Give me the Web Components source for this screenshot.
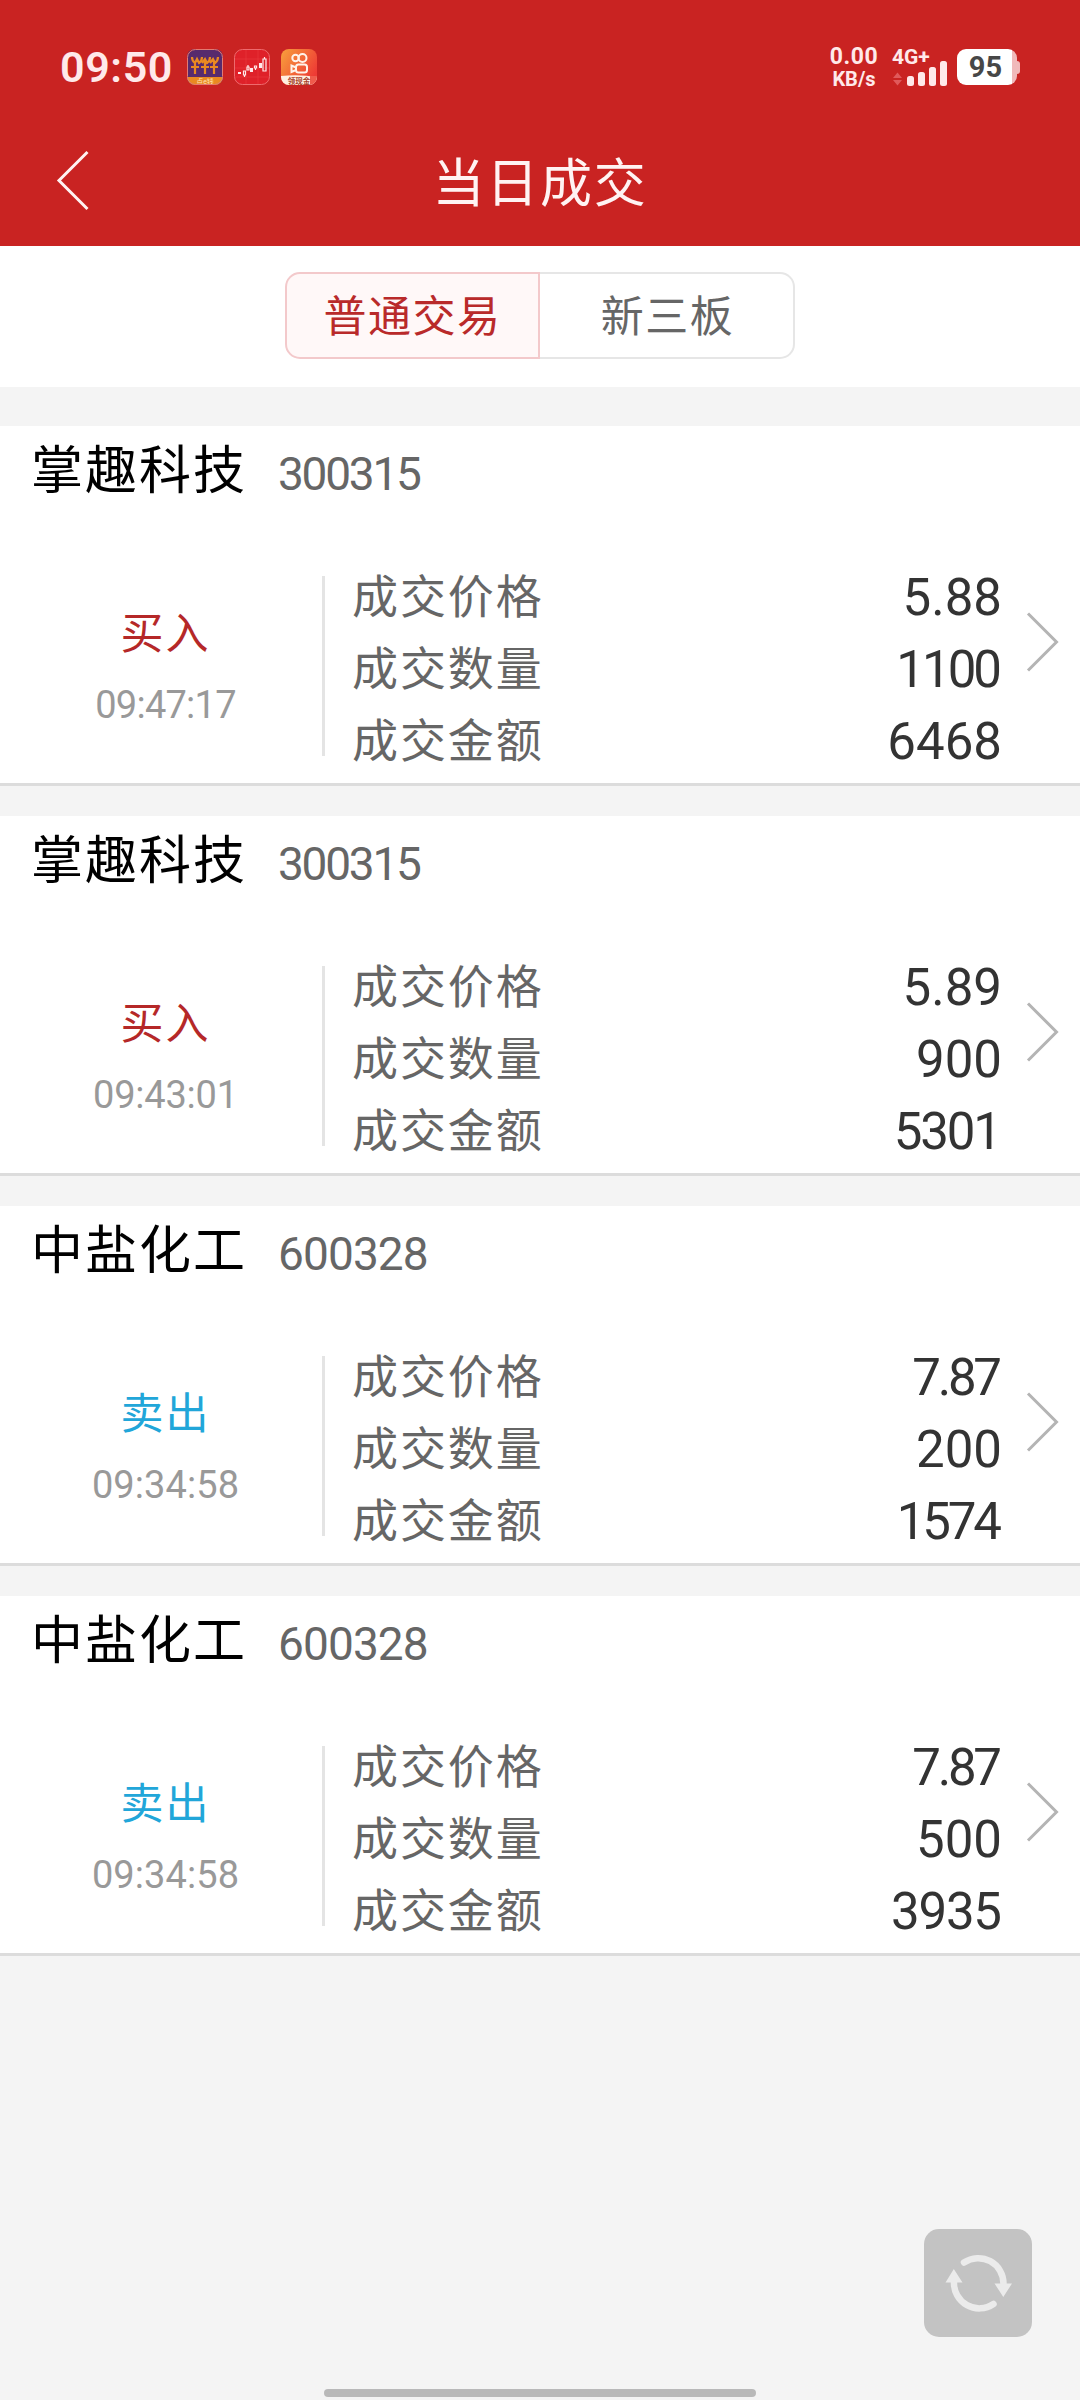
<!DOCTYPE html>
<html lang="zh-CN">
<head>
<meta charset="utf-8">
<title>当日成交</title>
<style>
  html, body {
    margin: 0;
    background: #f4f4f4;
  }
  body {
    width: 1080px;
    height: 2400px;
    overflow: hidden;
    font-family: Roboto, "Noto Sans CJK SC", sans-serif;
  }
</style>
</head>
<body>
<trade-page></trade-page>

<script>
class StatusBar extends HTMLElement {
  constructor() {
    super();
    this.attachShadow({ mode: 'open' });
  }

  connectedCallback() {
    this.shadowRoot.innerHTML = `
      <style>
        :host {
          display: flex;
          align-items: center;
          height: 134px;
          padding: 0 60px 0 60px;
          box-sizing: border-box;
          color: #ffe9ea;
        }
        .clock {
          width: 127px;
          font-size: 43px;
          font-weight: 600;
          line-height: 50px;
          letter-spacing: 0.6px;
        }
        .apps { display: flex; gap: 11px; }
        svg { display: block; }
        .net {
          margin-left: auto;
          width: 54px;
          text-align: center;
          font-weight: 700;
          font-size: 23px;
          line-height: 22px;
        }
        .net div:first-child { padding-top: 1px; letter-spacing: 0.5px; }
        .unit { font-size: 20px; }
        .signal { margin-left: 12px; width: 56px; }
        .gen {
          font-size: 21px;
          font-weight: 700;
          line-height: 18px;
          margin-left: -1px;
        }
        .battery {
          display: flex;
          align-items: center;
          margin-left: 8px;
        }
        .cell {
          width: 60px;
          height: 36px;
          border-radius: 9px;
          box-sizing: border-box;
          padding-right: 3px;
          background: linear-gradient(to right, #fff 55px, #f0b9ba 55px);
          color: #474747;
          font-size: 29px;
          font-weight: 700;
          line-height: 36px;
          text-align: center;
        }
        .cap {
          width: 3px;
          height: 13px;
          border-radius: 0 3px 3px 0;
          background: #f0b9ba;
        }
      </style>
      <div class="clock">09:50</div>
      <div class="apps">
        <svg width="36" height="36" viewBox="0 0 36 36">
          <defs><clipPath id="a"><rect width="36" height="36" rx="8"/></clipPath></defs>
          <g clip-path="url(#a)">
            <rect width="36" height="36" fill="#572a6d"/>
            <rect y="28" width="36" height="8" fill="#e98921"/>
            <path d="M5 8q0 4 3 6l2-4 2 4q3-2 3-6M15 14l3-4 2 4q3-2 3-6M23 14l3-4 2 4q3-2 3-6M8 14v11M18 13v12M27 13v12M4 18h8M14 18h8M23 18h8" fill="none" stroke="#e98921" stroke-width="2.200"/>
            <text x="18" y="35" font-size="7" text-anchor="middle" fill="#ffe1b5">点e钱</text>
          </g>
          <rect x=".5" y=".5" width="35" height="35" rx="8" fill="none" stroke="#e27a72"/>
        </svg>
        <svg width="36" height="36" viewBox="0 0 36 36">
          <rect x=".5" y=".5" width="35" height="35" rx="8" fill="#df2129" stroke="#ee6a6d"/>
          <path d="M1 10h34M1 19h34M1 28h34M12 1v34M24 1v34" stroke="#e8373e" stroke-width=".7"/>
          <path d="M4 23h3v2H4zM16 19h3v4h-3zM25 14h3v5h-3z" fill="#ffe9ea"/>
          <path d="M9.500 22h2v4h-2zM13 18h2v3h-2zM20.500 17h2v2h-2zM29 10h3v12h-3zM10.500 26v2M14 16v2M21.500 19v2M30.500 8v2" fill="none" stroke="#ffe9ea" stroke-width="1.200"/>
        </svg>
        <svg width="36" height="36" viewBox="0 0 36 36">
          <defs>
            <linearGradient id="g" x1="0" y1="0" x2="1" y2=".6"><stop stop-color="#f8a13c"/><stop offset="1" stop-color="#ee3b35"/></linearGradient>
            <clipPath id="b"><rect width="36" height="36" rx="8"/></clipPath>
          </defs>
          <g clip-path="url(#b)">
            <rect width="36" height="36" fill="url(#g)"/>
            <g fill="none" stroke="#fff3ea" stroke-width="2">
              <circle cx="14.500" cy="9" r="3.200"/><circle cx="21.500" cy="9" r="4"/>
              <rect x="15" y="15.500" width="11" height="8" rx="2.500"/>
              <path d="M15 18.500l-4.500-2v6.500l4.500-2z"/>
            </g>
            <path d="M0 27Q18 25 36 28V36H0z" fill="#fff0e2"/>
            <path d="M29 27h7v9h-7z" fill="#ef5b4c"/>
            <text x="18" y="34.500" font-size="7.500" font-weight="700" text-anchor="middle" fill="#a5402a">领现金</text>
          </g>
        </svg>
      </div>
      <div class="net"><div>0.00</div><div class="unit">KB/s</div></div>
      <div class="signal">
        <div class="gen">4G+</div>
        <svg width="56" height="20" viewBox="0 0 56 20" overflow="visible">
          <path d="M0 12l4.500-5.500 4.500 5.500zM0 14h9l-4.500 5.500z" fill="#e0595b"/>
          <g fill="#ffe9ea">
            <rect x="14" y="10" width="7" height="10" rx="2.500"/>
            <rect x="25" y="6" width="7" height="14" rx="2.500"/>
            <rect x="36" y="1" width="7" height="19" rx="2.500"/>
            <rect x="47" y="-5" width="7" height="25" rx="2.500"/>
          </g>
        </svg>
      </div>
      <div class="battery"><div class="cell">95</div><div class="cap"></div></div>
    `;
  }
}

class NavBar extends HTMLElement {
  constructor() {
    super();
    this.attachShadow({ mode: 'open' });
  }

  connectedCallback() {
    this.shadowRoot.innerHTML = `
      <style>
        :host {
          display: grid;
          grid-template-columns: 140px 1fr 140px;
          height: 112px;
          color: #fff3f3;
        }
        svg { display: block; margin: 16px 0 0 56px; }
        h1 {
          margin: 13px 0 0;
          font-size: 52px;
          font-weight: 400;
          line-height: 76px;
          letter-spacing: 1.8px;
          text-align: center;
        }
      </style>
      <svg width="34" height="61" viewBox="0 0 34 61">
        <path d="M31.500 2L3 30.500L31.500 59" fill="none" stroke="currentColor" stroke-width="3"/>
      </svg>
      <h1><slot></slot></h1>
    `;
  }
}

class SegmentTabs extends HTMLElement {
  constructor() {
    super();
    this.attachShadow({ mode: 'open' });
  }

  connectedCallback() {
    const labels = this.getAttribute('labels').split(',');
    this.shadowRoot.innerHTML = `
      <style>
        :host {
          display: flex;
          justify-content: center;
          height: 141px;
          padding-top: 26px;
          box-sizing: border-box;
          background: #fff;
        }
        .tab {
          width: 255px;
          height: 87px;
          box-sizing: border-box;
          border: 2px solid #e6e6e6;
          color: #666;
          font-size: 43px;
          line-height: 86px;
          letter-spacing: 1.5px;
          text-align: center;
        }
        .tab:last-child {
          border-left: 0;
          border-radius: 0 15px 15px 0;
          padding-left: 2px;
        }
        .tab.active {
          border-color: #f3c9cb;
          border-radius: 15px 0 0 15px;
          background: #fff8f8;
          color: #b92a2a;
        }
      </style>
      ${labels.map((t, i) => `<div class="tab ${i === 0 ? 'active' : ''}">${t}</div>`).join('')}
    `;
  }
}

// Extra tightening for the digits that should sit narrower than the rest
const NARROW = { 1: 1.5, 3: 0.6, 7: 1.6 };

function tracking(text, base, scale) {
  const sum = [...text].reduce((n, c) => n + (NARROW[c] || 0), 0);
  return (base - sum * scale).toFixed(2);
}

class TradeCard extends HTMLElement {
  constructor() {
    super();
    this.attachShadow({ mode: 'open' });
  }

  set trade(t) {
    const rows = [['成交价格', t.price], ['成交数量', t.count], ['成交金额', t.amount]];

    this.shadowRoot.innerHTML = `
      <style>
        :host {
          display: flex;
          flex-direction: column;
          height: 360px;
          box-sizing: border-box;
          border-bottom: 3px solid #dcdcdc;
          background: #fff;
        }
        .head {
          display: flex;
          height: 141px;
          padding-left: 31px;
          line-height: 91px;
        }
        .name {
          width: 247px;
          color: #000;
          font-size: 52px;
          letter-spacing: 2px;
        }
        .code { padding-top: 3px; color: #666; font-size: 46px; }
        .body { display: flex; }
        .side {
          width: 322px;
          padding: 27px 0 0 9px;
          box-sizing: border-box;
          text-align: center;
        }
        .kind {
          font-size: 43px;
          line-height: 80px;
          letter-spacing: 2px;
          color: ${t.side === '买入' ? '#b52828' : '#21a6d9'};
        }
        .time { color: #999; font-size: 38px; line-height: 63px; }
        .rows {
          flex: 1;
          height: 180px;
          margin-top: 9px;
          padding-left: 27px;
          border-left: 3px solid #e4e4e4;
        }
        .row {
          display: flex;
          justify-content: space-between;
          height: 72px;
          line-height: 72px;
        }
        .row:first-child { margin-top: -14px; }
        .label { margin-top: -1px; color: #666; font-size: 46px; letter-spacing: 1.9px; }
        .value { color: #333; font-size: 51px; }
        svg { display: block; width: 34px; margin: 44px 20px 0 24px; }
      </style>
      <div class="head">
        <div class="name">${t.name}</div>
        <div class="code" style="letter-spacing:${tracking(t.code, -0.5, 0.65)}px">${t.code}</div>
      </div>
      <div class="body">
        <div class="side">
          <div class="kind">${t.side}</div>
          <div class="time" style="letter-spacing:${tracking(t.time, 0.2, 0.2)}px">${t.time}</div>
        </div>
        <div class="rows">
          ${rows.map(([k, v]) => {
            const ls = tracking(v, 0, 1);
            return `
            <div class="row">
              <span class="label">${k}</span>
              <span class="value" style="letter-spacing:${ls}px;margin-right:${-ls}px">${v}</span>
            </div>`;
          }).join('')}
        </div>
        <svg width="34" height="61" viewBox="0 0 34 61">
          <path d="M2 2.500L30.500 31L2 59.500" fill="none" stroke="#b4b4b4" stroke-width="3"/>
        </svg>
      </div>
    `;
  }
}

class RefreshButton extends HTMLElement {
  constructor() {
    super();
    this.attachShadow({ mode: 'open' });
  }

  connectedCallback() {
    this.shadowRoot.innerHTML = `
      <style>
        :host {
          display: block;
          width: 108px;
          height: 108px;
          border-radius: 15px;
          background: #c3c3c3;
        }
        svg { display: block; }
      </style>
      <svg width="108" height="108" viewBox="0 0 108 108">
        <g fill="none" stroke="#ebebeb" stroke-width="6.500" stroke-linecap="round">
          <path d="M40 33.500A25.300 25.300 0 0 1 79.500 55"/>
          <path d="M69.500 75A25.300 25.300 0 0 1 30 53"/>
        </g>
        <path d="M70.500 54.500H88L79.300 68zM21.500 53.500H38.500L29.800 40z" fill="#ebebeb"/>
      </svg>
    `;
  }
}

class TradePage extends HTMLElement {
  constructor() {
    super();
    this.attachShadow({ mode: 'open' });
  }

  connectedCallback() {
    this.shadowRoot.innerHTML = `
      <style>
        :host {
          display: block;
          position: relative;
          height: 2400px;
        }
        header { height: 246px; background: #c92322; }
        .list {
          display: flex;
          flex-direction: column;
          gap: 30px;
          margin-top: 39px;
        }
        refresh-button {
          position: absolute;
          right: 48px;
          top: 2229px;
        }
        .home {
          position: absolute;
          left: 324px;
          bottom: 3px;
          width: 432px;
          height: 8px;
          border-radius: 4px;
          background: #b9b9b9;
        }
      </style>
      <header>
        <status-bar></status-bar>
        <nav-bar>当日成交</nav-bar>
      </header>
      <segment-tabs labels="普通交易,新三板"></segment-tabs>
      <div class="list"></div>
      <refresh-button></refresh-button>
      <div class="home"></div>
    `;

    const list = this.shadowRoot.querySelector('.list');
    trades.forEach(t => {
      const card = document.createElement('trade-card');
      card.trade = t;
      list.appendChild(card);
    });
  }
}

const trades = [
  { name: '掌趣科技', code: '300315', side: '买入', time: '09:47:17', price: '5.88', count: '1100', amount: '6468' },
  { name: '掌趣科技', code: '300315', side: '买入', time: '09:43:01', price: '5.89', count: '900', amount: '5301' },
  { name: '中盐化工', code: '600328', side: '卖出', time: '09:34:58', price: '7.87', count: '200', amount: '1574' },
  { name: '中盐化工', code: '600328', side: '卖出', time: '09:34:58', price: '7.87', count: '500', amount: '3935' }
];

customElements.define('status-bar', StatusBar);
customElements.define('nav-bar', NavBar);
customElements.define('segment-tabs', SegmentTabs);
customElements.define('trade-card', TradeCard);
customElements.define('refresh-button', RefreshButton);
customElements.define('trade-page', TradePage);
</script>
</body>
</html>
